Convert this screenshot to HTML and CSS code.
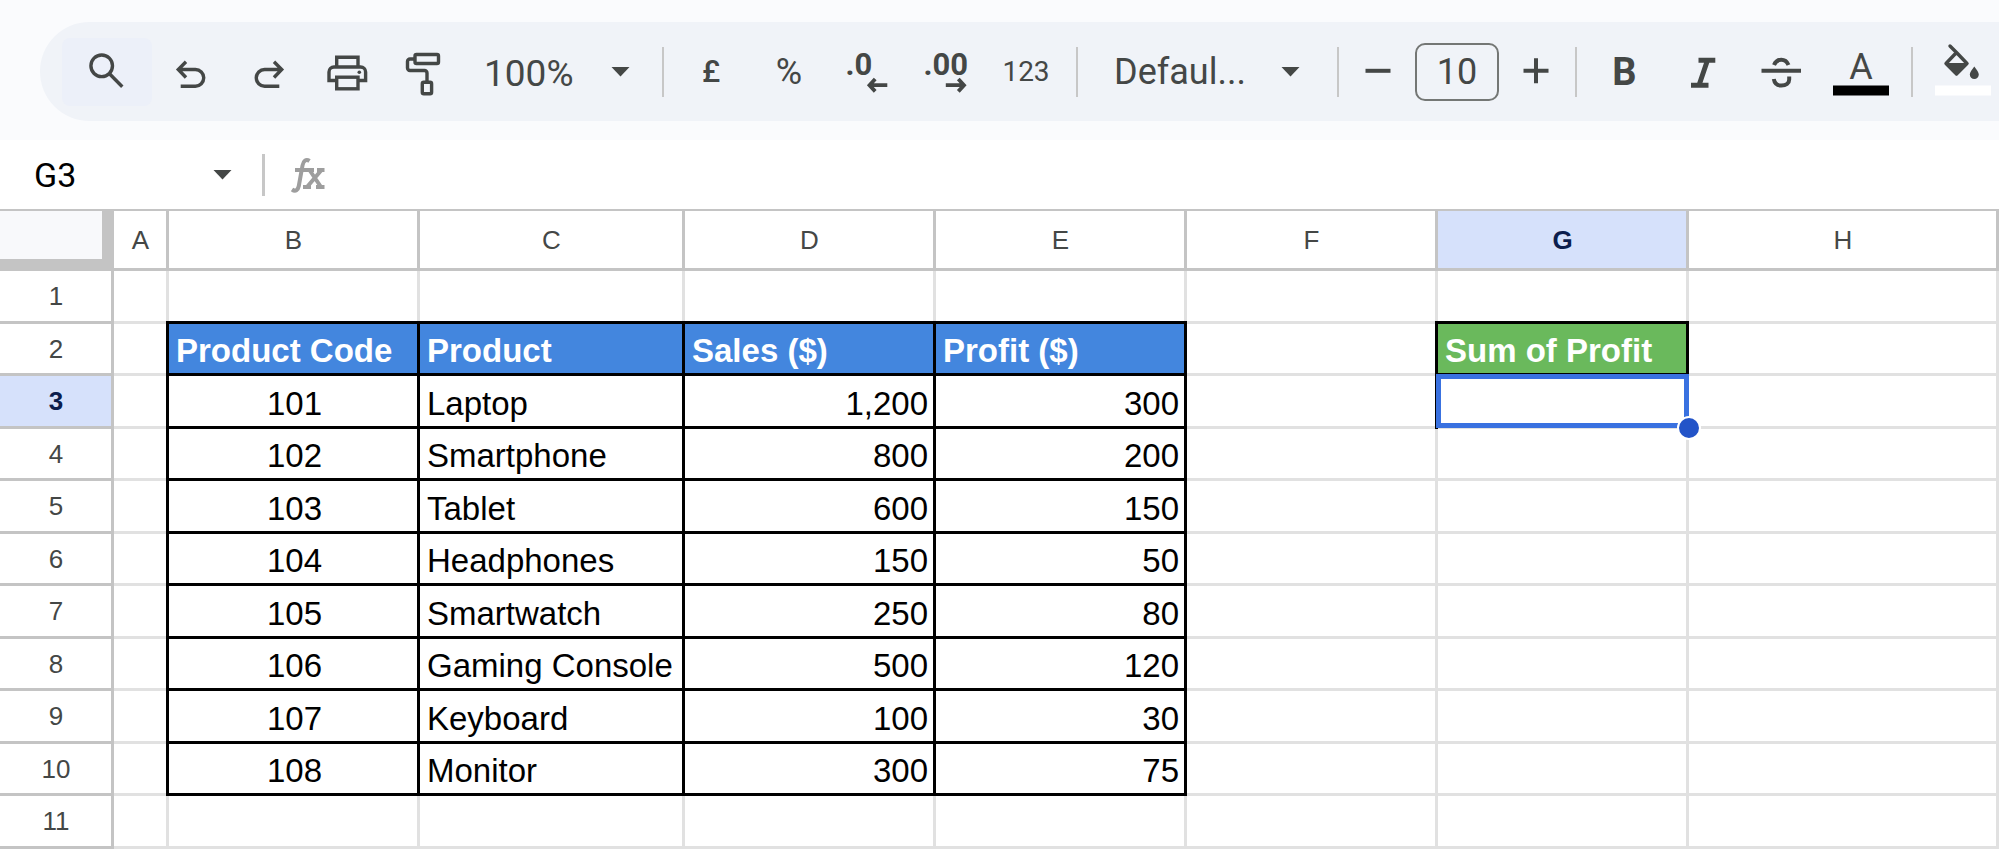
FILE: index.html
```html
<!DOCTYPE html>
<html lang="en">
<head>
<meta charset="utf-8">
<title>Product sales - Spreadsheet</title>
<link rel="stylesheet" href="styles.css">
</head>
<body>
<header class="topbar">
  <div class="toolbar" role="toolbar" aria-label="Formatting">
    <button class="tool search" aria-label="Search the menus"><svg class="icon" viewBox="0 0 48 48"><circle cx="18.7" cy="17.8" r="10.8"/><path d="M26.5 25.7 39.3 38.7"/></svg></button>
    <button class="tool" aria-label="Undo"><svg class="icon" viewBox="0 0 48 48"><path d="M19 13.8 11.3 21.5 19 29.5M11.5 21.5H28.4a8.35 8.35 0 0 1 0 16.7H13.7"/></svg></button>
    <button class="tool" aria-label="Redo"><svg class="icon" viewBox="0 0 48 48"><path d="M29 13.8 36.7 21.5 29 29.5M36.5 21.5H19.6a8.35 8.35 0 0 0 0 16.7H34.3"/></svg></button>
    <button class="tool" aria-label="Print"><svg class="icon" viewBox="0 0 48 48"><path d="M13.7 19V9.2H35V19M13.7 32.5H6V24a5 5 0 0 1 5-5H37.6a5 5 0 0 1 5 5V32.5H35"/><rect x="13.7" y="29.2" width="21.3" height="11.6"/><circle class="solid" cx="36.3" cy="24.3" r="1.8"/></svg></button>
    <button class="tool" aria-label="Paint format"><svg class="icon" viewBox="0 0 48 48"><rect x="14" y="6.5" width="23.5" height="9" rx="1.5"/><path d="M14 11H9a2.5 2.5 0 0 0-2.5 2.5V20A2.5 2.5 0 0 0 9 22.500H23.500A2.500 2.500 0 0 1 26 25V34"/><rect x="21.3" y="34.2" width="9.3" height="11.6" rx="1.5"/></svg></button>
    <div class="dropdown zoom"><select aria-label="Zoom"><option>100%</option></select></div>
    <span class="separator"></span>
    <button class="tool sign">£</button>
    <button class="tool percent">%</button>
    <button class="tool" aria-label="Decrease decimal places"><svg class="icon" viewBox="0 0 48 48"><text class="digits" x="2.5" y="27">.0</text><path class="arrow" d="M44.3 37.2H27M32.2 31 26.5 37.2 32.2 43.4"/></svg></button>
    <button class="tool" aria-label="Increase decimal places"><svg class="icon" viewBox="0 0 48 48"><text class="digits" x="2.5" y="27">.00</text><path class="arrow" d="M24.8 37.2H42M37.3 31 43 37.2 37.3 43.4"/></svg></button>
    <button class="tool formats">123</button>
    <span class="separator"></span>
    <div class="dropdown font"><select aria-label="Font"><option>Defaul...</option></select></div>
    <span class="separator"></span>
    <button class="tool step" aria-label="Decrease font size"><svg class="icon" viewBox="0 0 48 48"><path class="heavy" d="M11.5 22.8H36.5"/></svg></button>
    <input class="size" type="text" value="10" aria-label="Font size">
    <button class="tool step" aria-label="Increase font size"><svg class="icon" viewBox="0 0 48 48"><path class="heavy" d="M11.5 22.8H36.5M24 10.3V35.3"/></svg></button>
    <span class="separator"></span>
    <button class="tool" aria-label="Bold"><svg class="icon" viewBox="0 0 48 48"><text class="bold" x="24.500" y="37">B</text></svg></button>
    <button class="tool" aria-label="Italic"><svg class="icon" viewBox="0 0 48 48"><path class="italic" d="M20.500 12.300H37.300M13 37.300H30.500M29.500 12.300 21 37.300"/></svg></button>
    <button class="tool" aria-label="Strikethrough"><svg class="icon" viewBox="0 0 48 48"><path class="heavy" d="M5.500 22.800H45M18 17C19.500 13.500 22 11.800 25.300 11.800S31 13.500 32.500 17M17.800 31C18.500 35.300 21.500 37.600 25.400 37.600 30 37.600 33.200 35.300 33.200 31.500V28.500"/></svg></button>
    <button class="tool color" aria-label="Text colour"><svg class="icon wide" viewBox="0 0 60 56"><text class="letter" x="30" y="35">A</text><rect class="bar-black" x="2" y="41.500" width="56" height="10"/></svg></button>
    <span class="separator"></span>
    <button class="tool color" aria-label="Fill colour"><svg class="icon wide" viewBox="0 0 60 56"><path stroke-linejoin="round" stroke-linecap="round" d="M17 2 24 9 34 19.500 23.500 30 13 19.500 23.500 8.500"/><path class="solid" d="M12 19H35.500L23.500 31.500ZM41.300 22.500c2.600 3.400 4.500 6 4.500 8a4.500 4.500 0 0 1-9 0c0-2 1.900-4.600 4.500-8Z"/><rect class="bar-white" x="2" y="41.500" width="56" height="10"/></svg></button>
  </div>
</header>
<div class="formula">
  <div class="dropdown name"><select aria-label="Name box"><option>G3</option></select></div>
  <span class="divider"></span>
  <svg class="fx" viewBox="0 0 36 36" role="img" aria-label="Function"><path d="M2 32.500C5.500 35 8 33 8.800 29L12.500 8.500C13.300 4 16 1.500 19.500 4M5 13H18"/><path d="M17 13H24M27 13H34.500M13 30H21M26 30H34.500M19.500 13 31 30M31.500 13 17 30"/></svg>
</div>
<main class="sheet">
<table>
  <colgroup><col class="c-num"><col class="c-a"><col class="c-std"><col class="c-c"><col class="c-std"><col class="c-std"><col class="c-std"><col class="c-std"><col></colgroup>
  <thead>
    <tr><th class="corner"></th><th>A</th><th>B</th><th>C</th><th>D</th><th>E</th><th>F</th><th class="active">G</th><th>H</th></tr>
  </thead>
  <tbody>
    <tr><th>1</th><td class="k-c"></td><td class="k-b"></td><td class="k-b"></td><td class="k-b"></td><td class="k-b"></td><td class="k-c"></td><td class="k-b"></td><td></td></tr>
    <tr><th>2</th><td class="k-r"></td><td class="box blue">Product Code</td><td class="box blue">Product</td><td class="box blue">Sales ($)</td><td class="box blue">Profit ($)</td><td class="k-r"></td><td class="box green">Sum of Profit</td><td></td></tr>
    <tr><th class="active">3</th><td class="k-r"></td><td class="box code">101</td><td class="box">Laptop</td><td class="box num">1,200</td><td class="box num">300</td><td class="k-r"></td><td class="selected"><div class="cursor"><span class="handle"></span></div></td><td></td></tr>
    <tr><th>4</th><td class="k-r"></td><td class="box code">102</td><td class="box">Smartphone</td><td class="box num">800</td><td class="box num">200</td><td></td><td></td><td></td></tr>
    <tr><th>5</th><td class="k-r"></td><td class="box code">103</td><td class="box">Tablet</td><td class="box num">600</td><td class="box num">150</td><td></td><td></td><td></td></tr>
    <tr><th>6</th><td class="k-r"></td><td class="box code">104</td><td class="box">Headphones</td><td class="box num">150</td><td class="box num">50</td><td></td><td></td><td></td></tr>
    <tr><th>7</th><td class="k-r"></td><td class="box code">105</td><td class="box">Smartwatch</td><td class="box num">250</td><td class="box num">80</td><td></td><td></td><td></td></tr>
    <tr><th>8</th><td class="k-r"></td><td class="box code">106</td><td class="box">Gaming Console</td><td class="box num">500</td><td class="box num">120</td><td></td><td></td><td></td></tr>
    <tr><th>9</th><td class="k-r"></td><td class="box code">107</td><td class="box">Keyboard</td><td class="box num">100</td><td class="box num">30</td><td></td><td></td><td></td></tr>
    <tr><th>10</th><td class="k-r"></td><td class="box code">108</td><td class="box">Monitor</td><td class="box num">300</td><td class="box num">75</td><td></td><td></td><td></td></tr>
    <tr><th>11</th><td></td><td></td><td></td><td></td><td></td><td></td><td></td><td></td></tr>
  </tbody>
</table>
</main>
</body>
</html>
```

FILE: styles.css
```css
* { box-sizing: border-box; }

body {
  margin: 0;
  background: #fff;
  color: #000;
  font-family: "Liberation Sans", Arial, sans-serif;
  overflow-x: hidden;
}

button, select, input { font: inherit; color: inherit; }

/* Toolbar */
.topbar {
  background: #fafbfd;
  padding: 22px 0 19px 40px;
  overflow: hidden;
}

.toolbar {
  display: flex;
  align-items: center;
  height: 99px;
  padding-left: 22px;
  background: #f0f3f8;
  border-radius: 50px 0 0 50px;
  color: #444746;
  font-family: Roboto, sans-serif;
  font-size: 36px;
}

.toolbar > * { flex: none; }

.tool {
  display: flex;
  align-items: center;
  justify-content: center;
  width: 78px;
  height: 68px;
  padding: 0;
  border: 0;
  border-radius: 8px;
  background: none;
}

.search { width: 90px; background: #ecf0f9; }
.sign { font-size: 31px; font-weight: 500; }
.percent { font-size: 36px; }
.formats { width: 84px; font-size: 28px; }
.step { width: 62px; }
.color { width: 84px; }

.icon {
  display: block;
  width: 48px;
  height: 48px;
  overflow: visible;
  fill: none;
  stroke: currentColor;
  stroke-width: 3.4;
}
.icon.wide { width: 60px; height: 56px; }
.icon text { fill: currentColor; stroke: none; }
.icon .solid { fill: currentColor; stroke: none; }
.icon .arrow { stroke-width: 3.8; }
.icon .heavy { stroke-width: 4; }
.icon .italic { stroke-width: 5; }
.icon .bar-black { fill: #000; stroke: none; }
.icon .bar-white { fill: #fff; stroke: none; }
.digits { font-size: 31px; font-weight: 700; }
.bold { font-size: 38px; font-weight: 700; text-anchor: middle; }
.letter { font-size: 36px; font-weight: 400; text-anchor: middle; }

.separator {
  width: 2px;
  height: 50px;
  margin: 0 8px;
  background: #c7c7c7;
}

.dropdown { position: relative; }
.dropdown select {
  display: block;
  width: 100%;
  height: 68px;
  border: 0;
  background: none;
  appearance: none;
}
.dropdown::after {
  content: "";
  position: absolute;
  top: 29px;
  width: 19px;
  height: 10px;
  background: #444746;
  clip-path: polygon(0 0, 100% 0, 50% 100%);
  pointer-events: none;
}
.zoom { width: 190px; font-size: 37px; }
.zoom select { padding: 3px 0 0 20px; }
.zoom::after { right: 24px; }
.font { width: 243px; }
.font select { padding: 0 0 0 28px; }
.font::after { right: 29px; }

.size {
  width: 84px;
  height: 58px;
  margin: 0 6px;
  padding: 0;
  border: 2px solid #747775;
  border-radius: 10px;
  background: none;
  text-align: center;
}

/* Formula bar */
.formula {
  display: flex;
  align-items: center;
  height: 69px;
  font-family: Roboto, sans-serif;
  font-size: 34px;
}
.name { width: 262px; }
.name select { padding: 0 0 0 34px; }
.name::after { right: 30px; }
.divider { width: 3px; height: 42px; background: #c7c7c7; }
.fx {
  width: 36px;
  height: 36px;
  margin-left: 25px;
  fill: none;
  stroke: #9e9e9e;
  stroke-width: 4;
}

/* Sheet */
.sheet { border-top: 2px solid #c4c4c4; }

table {
  width: 100%;
  table-layout: fixed;
  border-collapse: separate;
  border-spacing: 0;
}
.c-num { width: 114px; }
.c-a { width: 55px; }
.c-std { width: 251px; }
.c-c { width: 265px; }

/* Each cell paints its right line, bottom line and the joint between them */
th, td {
  --right: #e1e1e1;
  --bottom: #e1e1e1;
  --joint: #e1e1e1;
  background-image:
    linear-gradient(var(--joint), var(--joint)),
    linear-gradient(var(--bottom), var(--bottom)),
    linear-gradient(var(--right), var(--right));
  background-position: right bottom, left bottom, right top;
  background-size: 3px 3px, 100% 3px, 3px 100%;
  background-repeat: no-repeat;
}

th {
  --right: #c4c4c4;
  --bottom: #c4c4c4;
  --joint: #c4c4c4;
  padding: 0 2px 3px 0;
  color: #444746;
  font-size: 26px;
  font-weight: 400;
  line-height: 30px;
  text-align: center;
  vertical-align: middle;
}
thead tr { height: 60px; }
tbody tr:nth-child(odd) { height: 53px; }
tbody tr:nth-child(even) { height: 52px; }

th.corner {
  background-color: #f8f9fb;
  background-size: 12px 12px, 100% 12px, 12px 100%;
}
th.active { background-color: #d6e1fb; color: #0b1d4d; font-weight: 700; }

td {
  padding: 0 8px 6px 7px;
  font-size: 33px;
  line-height: 38px;
  vertical-align: bottom;
  white-space: nowrap;
}
.k-c { --joint: #000; }
.k-r { --right: #000; --joint: #000; }
.k-b { --bottom: #000; --joint: #000; }
.box { --right: #000; --bottom: #000; --joint: #000; }
.blue { background-color: #4386de; color: #fff; font-weight: 700; }
.green { background-color: #6ab95c; color: #fff; font-weight: 700; }
.code { text-align: center; padding-left: 4px; padding-right: 4px; }
.num { text-align: right; }

/* Active cell frame and fill handle */
.selected { position: relative; }
.cursor {
  position: absolute;
  inset: -2px 0 1px -2px;
  border: 5px solid #3971e0;
}
.handle {
  position: absolute;
  right: -17px;
  bottom: -17px;
  width: 24px;
  height: 24px;
  border: 2px solid #fff;
  border-radius: 50%;
  background: #2354c8;
}
```
